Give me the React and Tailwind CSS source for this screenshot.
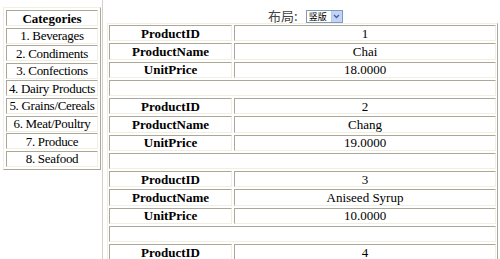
import React from "react";

const categories = [
  "1. Beverages",
  "2. Condiments",
  "3. Confections",
  "4. Dairy Products",
  "5. Grains/Cereals",
  "6. Meat/Poultry",
  "7. Produce",
  "8. Seafood",
];

const products = [
  { id: 1, name: "Chai", price: "18.0000" },
  { id: 2, name: "Chang", price: "19.0000" },
  { id: 3, name: "Aniseed Syrup", price: "10.0000" },
  { id: 4, name: "Chef Anton's Cajun Seasoning", price: "22.0000" },
];

const cell =
  "border border-t-[#aca899] border-l-[#aca899] border-b-[#f1efe2] border-r-[#f1efe2] flex items-center justify-center leading-none whitespace-nowrap";

function Categories() {
  return (
    <div className="w-[98px] border border-t-[#f1efe2] border-l-[#f1efe2] border-b-[#aca899] border-r-[#aca899] p-[2px] flex flex-col gap-[1.6px]">
      <div className={`${cell} h-[16px] font-bold`}>Categories</div>
      {categories.map((c) => (
        <div key={c} className={`${cell} h-[16px] tracking-[-0.3px]`}>
          {c}
        </div>
      ))}
    </div>
  );
}

function ProductTable() {
  return (
    <div className="w-[391px] border border-t-[#f1efe2] border-l-[#f1efe2] border-b-[#aca899] border-r-[#aca899] p-[1px] grid grid-cols-[123px_1fr] gap-[2px] auto-rows-[16.25px]">
      {products.map((p) => (
        <React.Fragment key={p.id}>
          <div className={`${cell} font-bold`}>ProductID</div>
          <div className={cell}>{p.id}</div>
          <div className={`${cell} font-bold`}>ProductName</div>
          <div className={cell}>{p.name}</div>
          <div className={`${cell} font-bold`}>UnitPrice</div>
          <div className={cell}>{p.price}</div>
          <div className={`${cell} col-span-2`}></div>
        </React.Fragment>
      ))}
    </div>
  );
}

export default function App() {
  return (
    <div className="w-[500px] h-[259px] overflow-hidden bg-white flex text-[13px] text-black font-['Liberation_Serif','Times_New_Roman',serif]">
      <div className="pl-[3px] pt-[7px] w-[101px] shrink-0">
        <Categories />
      </div>
      <div className="ml-[1px] border-l border-l-[#d4d0c8] pl-[4px] flex-1 flex flex-col">
        <div className="h-[25px] flex items-start pt-[9px] pl-[161px] gap-[8px]">
          <span className="text-[13px] leading-[14px] font-['Noto_Sans_CJK_SC',sans-serif] text-[#444]">
            布局:
          </span>
          <div className="flex items-stretch h-[13px] mt-[1px] border border-[#7f9db9] bg-white w-[37px]">
            <span className="flex-1 text-[9px] leading-[11px] pl-[2px] font-['Noto_Sans_CJK_SC',sans-serif]">
              竖版
            </span>
            <span className="w-[11px] bg-[#c1d3fb] border-l border-[#b5c8f0] flex items-center justify-center">
              <svg width="7" height="5" viewBox="0 0 7 5">
                <path d="M1 1 L3.5 3.5 L6 1" stroke="#4d6185" strokeWidth="1.3" fill="none" />
              </svg>
            </span>
          </div>
        </div>
        <ProductTable />
      </div>
    </div>
  );
}
